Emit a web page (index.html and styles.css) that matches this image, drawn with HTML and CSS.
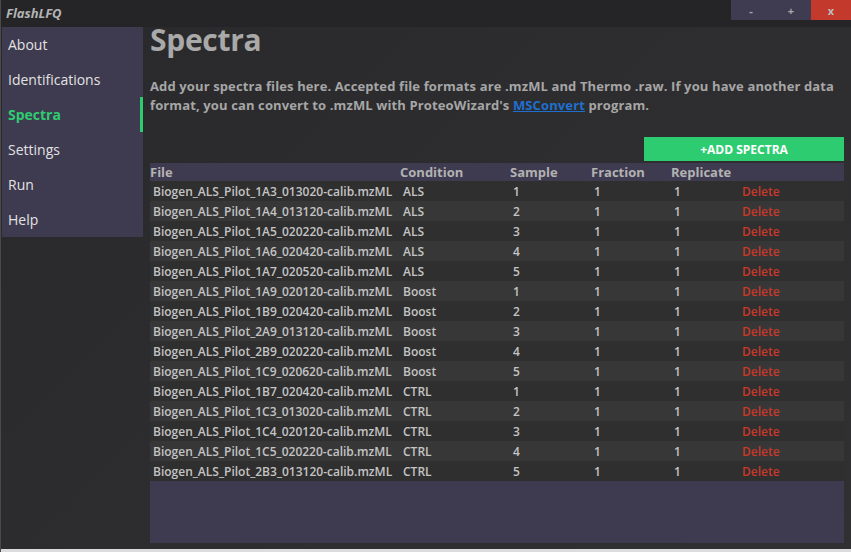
FILE: index.html
```html
<!DOCTYPE html>
<html>
<head>
<meta charset="utf-8">
<link rel="stylesheet" href="styles.css">
</head>
<body>
<div class="window">
  <div class="titlebar">
    <div class="apptitle">FlashLFQ</div>
    <div class="winbtns">
      <div class="wbtn">-</div>
      <div class="wbtn">+</div>
      <div class="wbtn close">x</div>
    </div>
  </div>
  <div class="main">
    <nav class="sidebar">
      <div class="navitem">About</div>
      <div class="navitem">Identifications</div>
      <div class="navitem active">Spectra</div>
      <div class="navitem">Settings</div>
      <div class="navitem">Run</div>
      <div class="navitem">Help</div>
    </nav>
    <section class="content">
      <h1 class="title">Spectra</h1>
      <p class="desc">Add your spectra files here. Accepted file formats are .mzML and Thermo .raw. If you have another data format, you can convert to .mzML with ProteoWizard's <span class="link">MSConvert</span> program.</p>
      <div class="actions"><div class="addbtn">+ADD SPECTRA</div></div>
      <div class="table">
        <div class="row head">
          <div>File</div><div>Condition</div><div>Sample</div><div>Fraction</div><div>Replicate</div><div></div>
        </div>
        <div class="row"><div>Biogen_ALS_Pilot_1A3_013020-calib.mzML</div><div>ALS</div><div>1</div><div>1</div><div>1</div><div class="del">Delete</div></div>
        <div class="row"><div>Biogen_ALS_Pilot_1A4_013120-calib.mzML</div><div>ALS</div><div>2</div><div>1</div><div>1</div><div class="del">Delete</div></div>
        <div class="row"><div>Biogen_ALS_Pilot_1A5_020220-calib.mzML</div><div>ALS</div><div>3</div><div>1</div><div>1</div><div class="del">Delete</div></div>
        <div class="row"><div>Biogen_ALS_Pilot_1A6_020420-calib.mzML</div><div>ALS</div><div>4</div><div>1</div><div>1</div><div class="del">Delete</div></div>
        <div class="row"><div>Biogen_ALS_Pilot_1A7_020520-calib.mzML</div><div>ALS</div><div>5</div><div>1</div><div>1</div><div class="del">Delete</div></div>
        <div class="row"><div>Biogen_ALS_Pilot_1A9_020120-calib.mzML</div><div>Boost</div><div>1</div><div>1</div><div>1</div><div class="del">Delete</div></div>
        <div class="row"><div>Biogen_ALS_Pilot_1B9_020420-calib.mzML</div><div>Boost</div><div>2</div><div>1</div><div>1</div><div class="del">Delete</div></div>
        <div class="row"><div>Biogen_ALS_Pilot_2A9_013120-calib.mzML</div><div>Boost</div><div>3</div><div>1</div><div>1</div><div class="del">Delete</div></div>
        <div class="row"><div>Biogen_ALS_Pilot_2B9_020220-calib.mzML</div><div>Boost</div><div>4</div><div>1</div><div>1</div><div class="del">Delete</div></div>
        <div class="row"><div>Biogen_ALS_Pilot_1C9_020620-calib.mzML</div><div>Boost</div><div>5</div><div>1</div><div>1</div><div class="del">Delete</div></div>
        <div class="row"><div>Biogen_ALS_Pilot_1B7_020420-calib.mzML</div><div>CTRL</div><div>1</div><div>1</div><div>1</div><div class="del">Delete</div></div>
        <div class="row"><div>Biogen_ALS_Pilot_1C3_013020-calib.mzML</div><div>CTRL</div><div>2</div><div>1</div><div>1</div><div class="del">Delete</div></div>
        <div class="row"><div>Biogen_ALS_Pilot_1C4_020120-calib.mzML</div><div>CTRL</div><div>3</div><div>1</div><div>1</div><div class="del">Delete</div></div>
        <div class="row"><div>Biogen_ALS_Pilot_1C5_020220-calib.mzML</div><div>CTRL</div><div>4</div><div>1</div><div>1</div><div class="del">Delete</div></div>
        <div class="row"><div>Biogen_ALS_Pilot_2B3_013120-calib.mzML</div><div>CTRL</div><div>5</div><div>1</div><div>1</div><div class="del">Delete</div></div>
        <div class="filler"></div>
      </div>
    </section>
  </div>
  <div class="bottomstrip"></div>
</div>
</body>
</html>
```

FILE: styles.css
```css
* { box-sizing: border-box; }
html, body { margin: 0; padding: 0; }
body {
  width: 851px;
  height: 552px;
  overflow: hidden;
  background: #252526;
  font-family: "Open Sans", "Noto Sans", sans-serif;
}
.window {
  width: 851px;
  height: 552px;
  display: flex;
  flex-direction: column;
  border-left: 1px solid #4a4a4c;
  background: linear-gradient(135deg, #29292b 0%, #2e2e30 60%, #303032 100%);
}
.titlebar {
  height: 27px;
  flex: none;
  display: flex;
  justify-content: space-between;
  align-items: flex-start;
  background: #252527;
}
.apptitle {
  padding: 4px 0 0 5px;
  font-size: 13px;
  font-weight: 700;
  font-style: italic;
  color: #b4b4b4;
}
.winbtns { display: flex; }
.wbtn {
  width: 40px;
  height: 20px;
  background: #3f3c51;
  color: #a8a8a8;
  font-size: 11px;
  font-weight: 700;
  display: flex;
  align-items: center;
  justify-content: center;
}
.wbtn.close { background: #c3392c; color: #bdbdbd; }
.main {
  flex: 1;
  display: flex;
  min-height: 0;
}
.sidebar {
  margin-left: 1px;
  width: 141px;
  height: 210px;
  flex: none;
  background: #3e3a4f;
  display: flex;
  flex-direction: column;
}
.navitem {
  height: 35px;
  padding-left: 6px;
  display: flex;
  align-items: center;
  font-size: 14px;
  color: #e2e2e2;
}
.navitem.active {
  color: #2ecc71;
  font-weight: 700;
  border-right: 3px solid #2ecc71;
}
.content {
  flex: 1;
  padding: 0 7px 6px 7px;
  display: flex;
  flex-direction: column;
  min-width: 0;
}
.title {
  margin: 0;
  font-size: 30px;
  line-height: 26px;
  height: 27px;
  font-weight: 700;
  color: #a9a9a9;
  letter-spacing: -0.3px;
}
.desc {
  margin: 23px 0 0 0;
  font-size: 13px;
  line-height: 19px;
  font-weight: 700;
  color: #a6a6a6;
  letter-spacing: 0.12px;
}
.link {
  color: #1e6fd0;
  text-decoration: underline;
}
.actions {
  display: flex;
  justify-content: flex-end;
  margin-top: 22px;
}
.addbtn {
  width: 200px;
  height: 24px;
  background: #2ecc71;
  color: #ffffff;
  font-size: 12px;
  font-weight: 700;
  display: flex;
  align-items: center;
  justify-content: center;
}
.table {
  margin-top: 2px;
  flex: 1;
  display: flex;
  flex-direction: column;
  background: #3e3a4f;
}
.row {
  display: grid;
  grid-template-columns: 250px 110px 81px 80px 71px 1fr;
  height: 20px;
  align-items: center;
  font-size: 12px;
  font-weight: 600;
  color: #c4c4c4;
}
.row > div { padding-left: 3px; white-space: nowrap; }
.row.head {
  height: 18px;
  background: #3e3a4f;
  color: #b2b2b2;
  font-size: 13px;
  font-weight: 700;
}
.row.head > div { padding-left: 0; }
.row:nth-child(even) { background: #2f2f2f; }
.row:nth-child(odd):not(.head) { background: #373737; }
.row > .del { color: #c8392b; font-weight: 600; padding-left: 0; }
.filler { flex: 1; }
.bottomstrip {
  height: 3px;
  flex: none;
  background: #dcdcdc;
}
```
